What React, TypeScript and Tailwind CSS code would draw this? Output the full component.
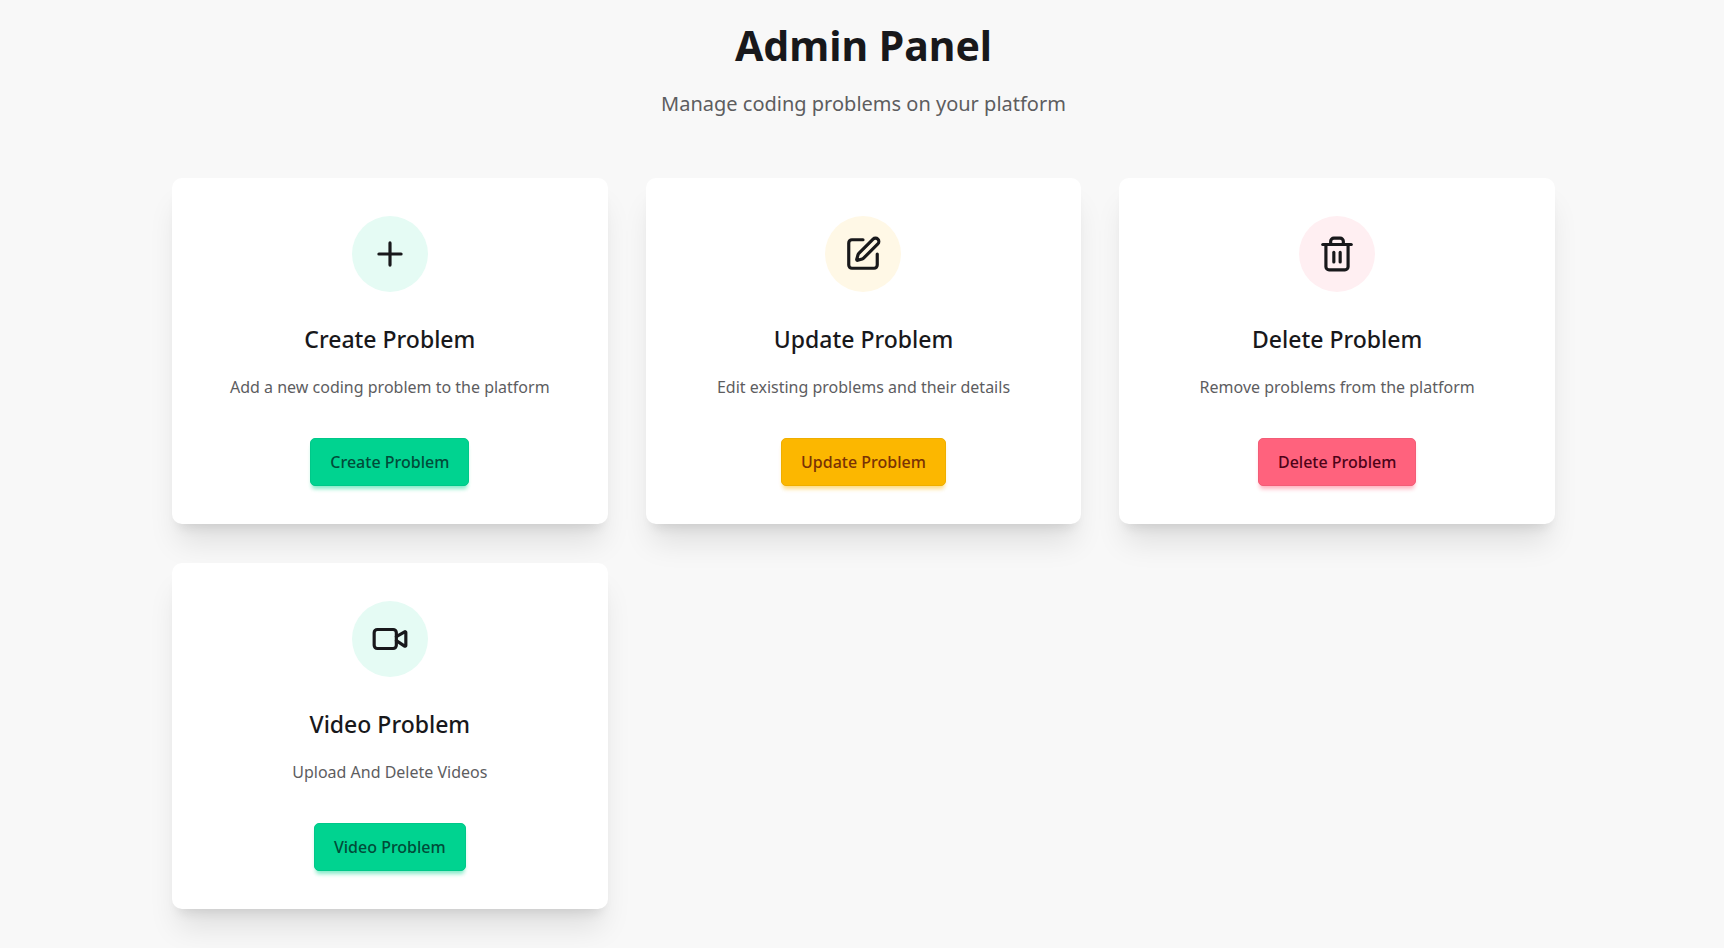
import { Plus, SquarePen, Trash2, Video, type LucideIcon } from 'lucide-react';

type Action = {
  title: string;
  description: string;
  icon: LucideIcon;
  circle: string;
  button: string;
};

const success =
  'bg-[#00d390] text-[#004c39] border-[#00c889] shadow-[0_4px_4px_-2px_#00d3904d,0_5px_4px_-2px_#00d3904d]';
const warning =
  'bg-[#fcb700] text-[#793205] border-[#efae00] shadow-[0_4px_4px_-2px_#fcb7004d,0_5px_4px_-2px_#fcb7004d]';
const error =
  'bg-[#ff627d] text-[#4d0218] border-[#f25d77] shadow-[0_4px_4px_-2px_#ff627d4d,0_5px_4px_-2px_#ff627d4d]';

const actions: Action[] = [
  {
    title: 'Create Problem',
    description: 'Add a new coding problem to the platform',
    icon: Plus,
    circle: 'bg-[#e5fbf4]',
    button: success,
  },
  {
    title: 'Update Problem',
    description: 'Edit existing problems and their details',
    icon: SquarePen,
    circle: 'bg-[#fff8e6]',
    button: warning,
  },
  {
    title: 'Delete Problem',
    description: 'Remove problems from the platform',
    icon: Trash2,
    circle: 'bg-[#ffeff2]',
    button: error,
  },
  {
    title: 'Video Problem',
    description: 'Upload And Delete Videos',
    icon: Video,
    circle: 'bg-[#e5fbf4]',
    button: success,
  },
];

function ActionCard({ title, description, icon: Icon, circle, button }: Action) {
  return (
    <article className="flex flex-col items-center rounded-[10px] bg-white p-[38px] text-center shadow-[0_24px_30px_-6px_rgb(0_0_0/0.1),0_10px_12px_-7px_rgb(0_0_0/0.1)]">
      <div className={`flex size-[76px] items-center justify-center rounded-full ${circle}`}>
        <Icon size={38} strokeWidth={2} aria-hidden="true" />
      </div>
      <h2 className="mt-[29px] text-[23px] leading-9 font-medium">{title}</h2>
      <p className="mt-4 text-base leading-7 text-[#5d5d5f]">{description}</p>
      <button
        type="button"
        className={`mt-[37px] h-12 cursor-pointer rounded-[5px] border px-[19px] text-base font-medium ${button}`}
      >
        {title}
      </button>
    </article>
  );
}

export default function App() {
  return (
    <main className="min-h-screen bg-[#f8f8f8] pt-[19px] pb-[38px] pl-[3px] font-['Noto_Sans',sans-serif] text-[#18181b]">
      <header className="text-center">
        <h1 className="text-[41px] leading-[52px] font-bold">Admin Panel</h1>
        <p className="mt-[17px] text-xl leading-8 text-[#5d5d5f]">
          Manage coding problems on your platform
        </p>
      </header>
      <section className="mx-auto mt-[58px] grid max-w-[1383px] grid-cols-1 gap-x-[38px] gap-y-[39px] md:grid-cols-2 lg:grid-cols-3">
        {actions.map((action) => (
          <ActionCard key={action.title} {...action} />
        ))}
      </section>
    </main>
  );
}
